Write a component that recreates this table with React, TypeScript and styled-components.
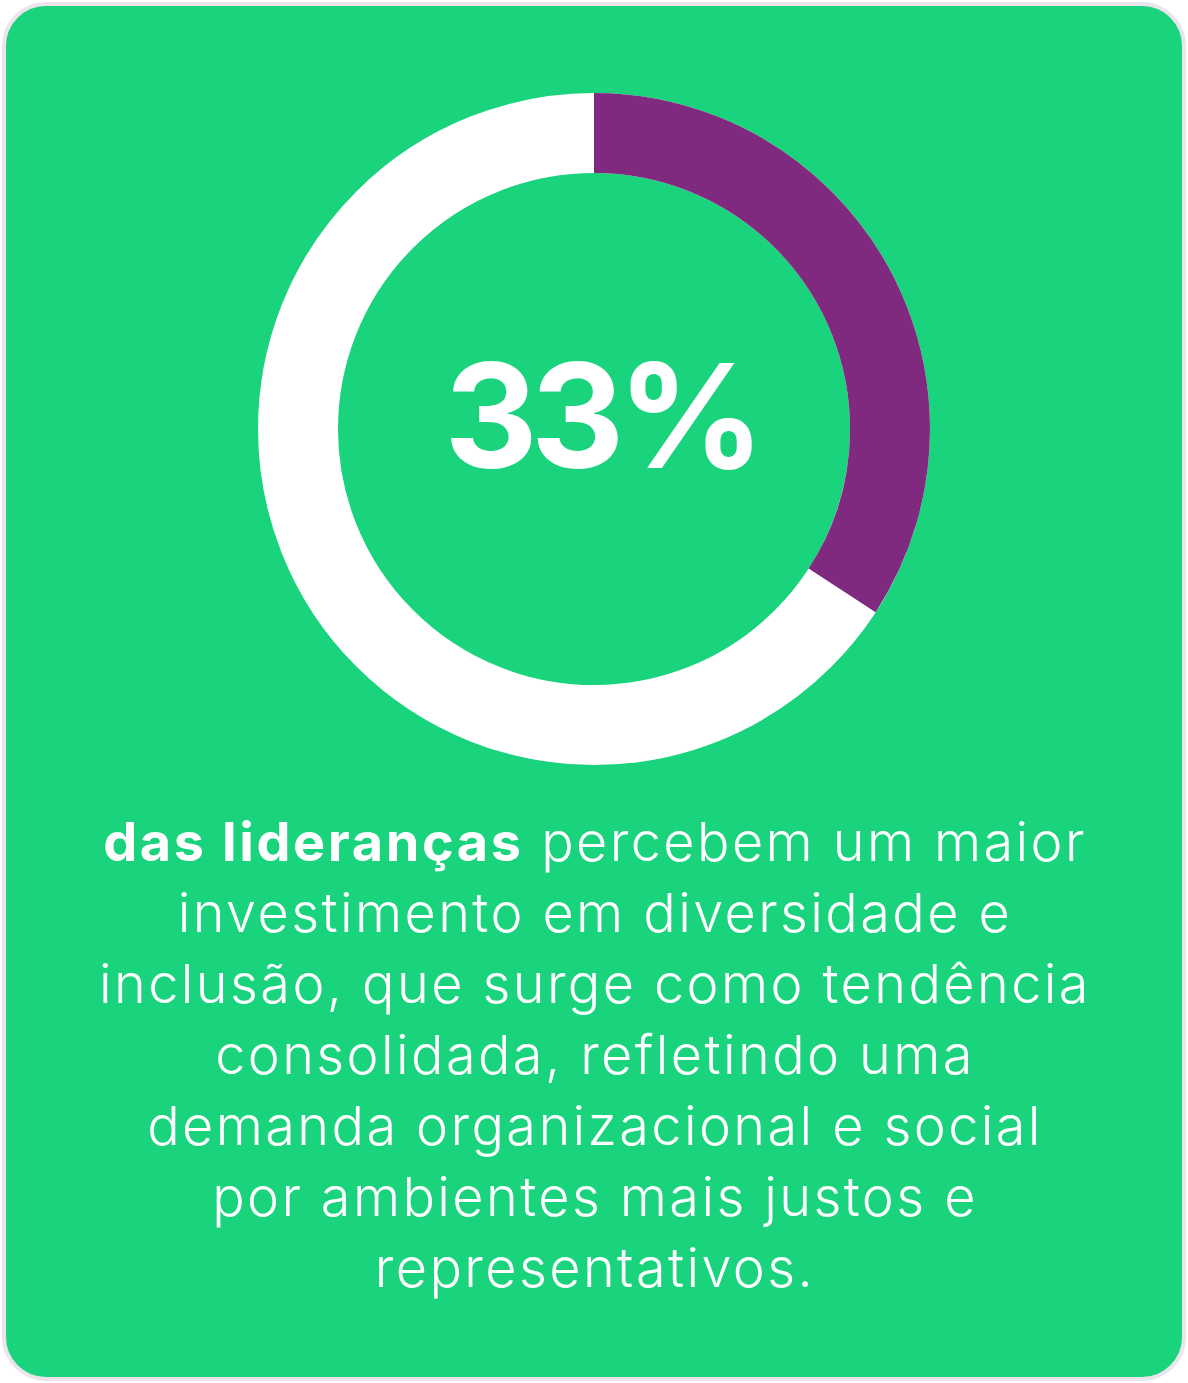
import React from "react"
import styled, { createGlobalStyle } from "styled-components"

const GlobalStyle = createGlobalStyle`
  html, body {
    margin: 0;
    padding: 0;
    background: #ffffff;
  }
  body {
    font-family: Inter, "Noto Sans", sans-serif;
  }
`

const Card = styled.div`
  box-sizing: border-box;
  margin: 2px;
  width: 1184px;
  height: 1379px;
  border: 4px solid #ece4ed;
  border-radius: 44px;
  background: #19d37d;
  display: flex;
  flex-direction: column;
  align-items: center;
  padding-top: 87px;
`

const DonutWrap = styled.div`
  position: relative;
  width: 672px;
  height: 672px;

  svg {
    display: block;
  }
`

const Value = styled.div`
  position: absolute;
  inset: 0;
  display: flex;
  align-items: center;
  justify-content: center;
  color: #ffffff;
  font-family: Inter, "Noto Sans", sans-serif;
  font-weight: 700;
  font-size: 145px;
  letter-spacing: -7px;
  padding-left: 14px;
  padding-bottom: 28px;
`

const Caption = styled.div`
  margin-top: 41px;
  display: flex;
  flex-direction: column;
  align-items: center;
  color: #ffffff;
  font-family: Inter, "Noto Sans", sans-serif;
  font-weight: 350;
  font-size: 54px;
  line-height: 71px;
  letter-spacing: 2.4px;
`

const Line = styled.div`
  white-space: nowrap;
  padding-left: 2px;
`

const Strong = styled.span`
  font-weight: 700;
  letter-spacing: 2.6px;
`

const lines: React.ReactNode[] = [
  <><Strong>das lideranças</Strong> percebem um maior</>,
  "investimento em diversidade e",
  "inclusão, que surge como tendência",
  "consolidada, refletindo uma",
  "demanda organizacional e social",
  "por ambientes mais justos e",
  "representativos.",
]

function Donut({ percent }: { percent: number }) {
  const size = 672
  const stroke = 80
  const r = (size - stroke) / 2
  const c = 2 * Math.PI * r
  const filled = c * percent

  return (
    <DonutWrap>
      <svg width={size} height={size} viewBox={`0 0 ${size} ${size}`}>
        <circle cx={size / 2} cy={size / 2} r={r} fill="none" stroke="#ffffff" strokeWidth={stroke} />
        <circle
          cx={size / 2}
          cy={size / 2}
          r={r}
          fill="none"
          stroke="#7f2a7e"
          strokeWidth={stroke}
          strokeDasharray={`${filled} ${c}`}
          transform={`rotate(-90 ${size / 2} ${size / 2})`}
        />
      </svg>
      <Value>33%</Value>
    </DonutWrap>
  )
}

export default function App() {
  return (
    <>
      <GlobalStyle />
      <Card>
        <Donut percent={123 / 360} />
        <Caption>
          {lines.map((line, i) => (
            <Line key={i}>{line}</Line>
          ))}
        </Caption>
      </Card>
    </>
  )
}
